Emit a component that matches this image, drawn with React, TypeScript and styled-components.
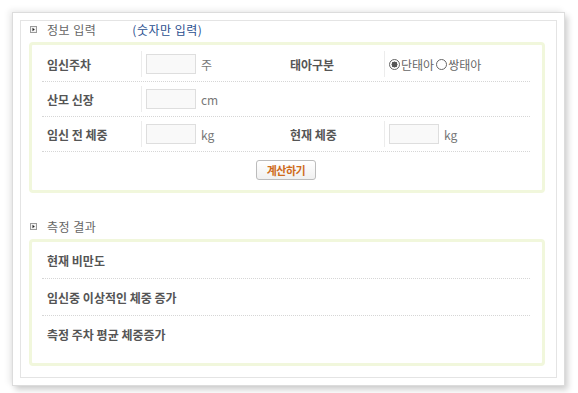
import React from "react";
import styled, { createGlobalStyle } from "styled-components";

const GlobalStyle = createGlobalStyle`
	body {
		margin: 0;
		background: #fff;
		font-family: "Noto Sans CJK KR", "Liberation Sans", sans-serif;
		font-size: 12px;
		color: #555;
	}
`;

const Page = styled.div`
	width: 578px;
	height: 393px;
	padding: 12px 13px 13px 12px;
	box-sizing: border-box;
`;

const Paper = styled.div`
	border: 1px solid #dcdcdc;
	background: #fff;
	padding: 7px;
	box-shadow: 3px 4px 6px rgba(0, 0, 0, 0.18), -3px -2px 6px rgba(0, 0, 0, 0.08);
`;

const Inner = styled.div`
	border: 1px solid #e4e4e4;
	padding: 0 11px 6px 8px;
	height: 350px;
`;

interface SectionTitleProps {
	first?: boolean;
}

const SectionTitle = styled.div<SectionTitleProps>`
	display: flex;
	align-items: center;
	height: 16px;
	margin: ${(p) => (p.first ? "0" : "25px")} 0 5px 0;
	padding-left: 1px;
	color: #666;
	font-size: 12px;
	letter-spacing: 0.5px;
`;

const Bullet = styled.svg`
	width: 7px;
	height: 7px;
	margin-right: 10px;
	flex: none;
`;

const Hint = styled.span`
	margin-left: 36px;
	color: #2b4f8f;
`;

interface GreenBoxProps {
	result?: boolean;
}

const GreenBox = styled.div<GreenBoxProps>`
	border: 3px solid #f1f7dc;
	border-radius: 4px;
	padding: ${(p) => (p.result ? "0 12px 11px 10px" : "2px 12px 0 10px")};
`;

const Row = styled.div`
	display: flex;
	align-items: center;
	height: 34px;
	border-bottom: 1px dotted #d6d6d6;
`;

const ResultRow = styled.div`
	display: flex;
	align-items: center;
	height: 36px;
	padding-left: 5px;
	font-weight: bold;
	color: #555;
	border-bottom: 1px dotted #d6d6d6;

	&:last-child {
		border-bottom: none;
	}
`;

const Label = styled.div`
	width: 94px;
	padding-left: 5px;
	font-weight: bold;
	color: #555;
	align-self: stretch;
	display: flex;
	align-items: center;
`;

interface CellProps {
	wide?: boolean;
}

const Cell = styled.div<CellProps>`
	display: flex;
	align-items: center;
	width: ${(p) => (p.wide ? "143px" : "144px")};
	height: 26px;
	border-left: 1px solid #ececec;
	padding-left: 4px;
	box-sizing: border-box;
	color: #777;
`;

const Input = styled.input`
	width: 50px;
	height: 20px;
	box-sizing: border-box;
	border: 1px solid #dedede;
	background: #f9f9f9;
	margin: 0 5px 0 0;
	padding: 0;
`;

const Radio = styled.span<{ checked?: boolean }>`
	display: inline-block;
	width: 11px;
	height: 11px;
	border: 1px solid #666;
	border-radius: 50%;
	box-sizing: border-box;
	margin-right: 1px;
	background: ${(p) => (p.checked ? "radial-gradient(circle, #555 0 2.8px, #fff 3.2px)" : "#fff")};
`;

const RadioLabel = styled.label`
	display: inline-flex;
	align-items: center;
	margin-right: 2px;
	color: #666;
`;

const ButtonRow = styled.div`
	display: flex;
	justify-content: center;
	padding: 8px 0 10px 0;
`;

const CalcButton = styled.button`
	height: 20px;
	padding: 0 10px;
	border: 1px solid #bcbcbc;
	border-radius: 3px;
	background: linear-gradient(#ffffff, #f0f0f0);
	color: #cf6b1c;
	font-family: inherit;
	font-size: 11px;
	font-weight: bold;
	line-height: 18px;
	letter-spacing: -0.5px;
`;

const Arrow = () => (
	<Bullet viewBox="0 0 7 7">
		<rect x="0.5" y="0.5" width="6" height="6" fill="#f4f4f4" stroke="#9a9a9a" />
		<path d="M2.5 1.8 L4.8 3.5 L2.5 5.2 Z" fill="#222" />
	</Bullet>
);

const App = () => {
	return (
		<Page>
			<GlobalStyle />
			<Paper>
				<Inner>
					<SectionTitle first>
						<Arrow />
						정보 입력
						<Hint>(숫자만 입력)</Hint>
					</SectionTitle>
					<GreenBox>
						<Row>
							<Label>임신주차</Label>
							<Cell>
								<Input type="text" />주
							</Cell>
							<Label>태아구분</Label>
							<Cell wide>
								<RadioLabel>
									<Radio checked />단태아
								</RadioLabel>
								<RadioLabel>
									<Radio />쌍태아
								</RadioLabel>
							</Cell>
						</Row>
						<Row>
							<Label>산모 신장</Label>
							<Cell>
								<Input type="text" />cm
							</Cell>
						</Row>
						<Row>
							<Label>임신 전 체중</Label>
							<Cell>
								<Input type="text" />kg
							</Cell>
							<Label>현재 체중</Label>
							<Cell wide>
								<Input type="text" />kg
							</Cell>
						</Row>
						<ButtonRow>
							<CalcButton type="button">계산하기</CalcButton>
						</ButtonRow>
					</GreenBox>
					<SectionTitle>
						<Arrow />
						측정 결과
					</SectionTitle>
					<GreenBox result>
						<ResultRow>현재 비만도</ResultRow>
						<ResultRow>임신중 이상적인 체중 증가</ResultRow>
						<ResultRow>측정 주차 평균 체중증가</ResultRow>
					</GreenBox>
				</Inner>
			</Paper>
		</Page>
	);
};

export default App;
